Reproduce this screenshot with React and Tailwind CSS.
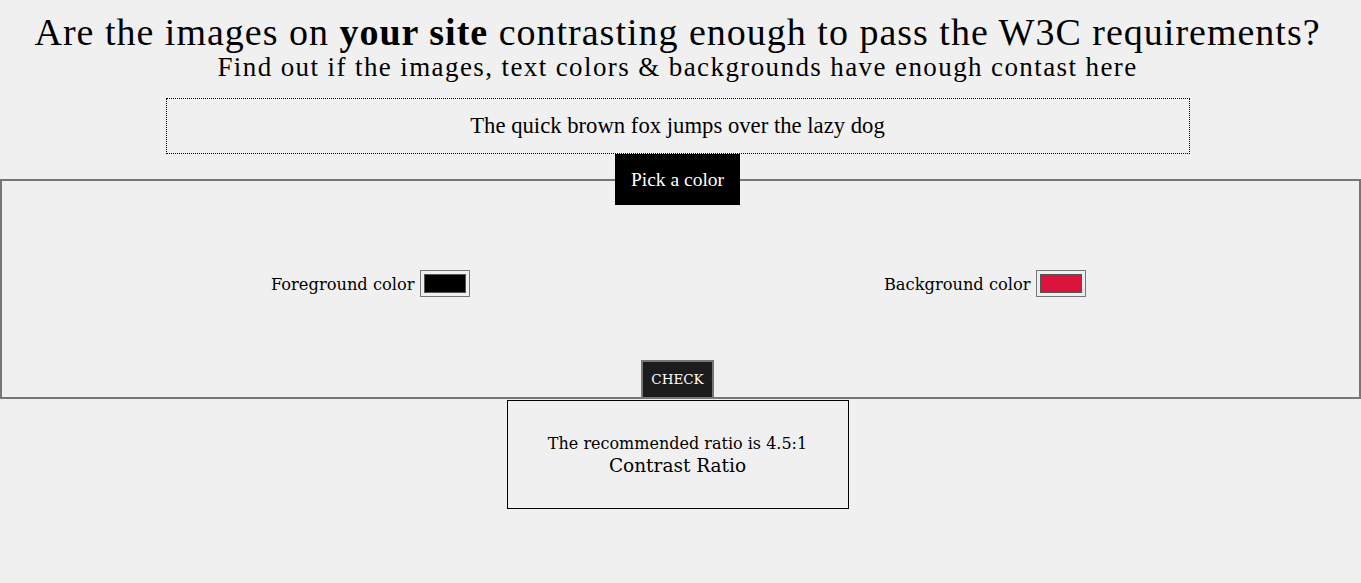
export default function App() {
  const garamond = { fontFamily: '"Liberation Serif", "Times New Roman", serif' };
  const basker = { fontFamily: '"DejaVu Serif", "Liberation Serif", serif' };
  return (
    <div className="min-h-[583px] bg-[#f0f0f0] text-black" style={garamond}>
      <div className="w-[1355px]">
        <header className="pt-[13px] text-center">
          <h1 className="text-[38px] leading-[38px] font-normal tracking-[1px]">
            Are the images on <b>your site</b> contrasting enough to pass the W3C requirements?
          </h1>
          <h2 className="text-[27px] leading-[32px] tracking-[1.4px]">
            Find out if the images, text colors &amp; backgrounds have enough contast here
          </h2>
        </header>

        <div className="mx-auto mt-[15px] flex h-[56px] w-[1024px] items-center justify-center border border-dotted border-black text-[22.7px]">
          The quick brown fox jumps over the lazy dog
        </div>
      </div>

      <fieldset className="border-2 border-[#777] pl-[61px] pr-[67px] pb-0 pt-0">
        <legend className="mx-auto bg-black px-[16px] py-[12px] text-[19.5px] leading-[27px] text-white">
          Pick a color
        </legend>
        <div className="grid grid-cols-2 pt-[65px]" style={basker}>
          <label className="flex items-center justify-center gap-[5px] text-[16.25px]">
            <span className="translate-y-[2px]">Foreground color</span>
            <span className="inline-block h-[27px] w-[50px] border border-[#777] bg-[#efefef] p-[3px]">
              <span className="block h-full w-full border border-[#555] bg-black" />
            </span>
          </label>
          <label className="flex items-center justify-center gap-[5px] text-[16.25px]">
            <span className="translate-y-[2px]">Background color</span>
            <span className="inline-block h-[27px] w-[50px] border border-[#777] bg-[#efefef] p-[3px]">
              <span className="block h-full w-full border border-[#555] bg-[#dc143c]" />
            </span>
          </label>
        </div>
        <div className="mt-[63px] flex justify-center">
          <button
            className="h-[37px] w-[73px] border-2 border-b-0 border-[#777] bg-[#1c1c1c] text-[13.5px] text-white"
            style={basker}
          >
            CHECK
          </button>
        </div>
      </fieldset>

      <div className="w-[1355px]">
        <div
          className="mx-auto mt-[1px] flex h-[109px] w-[342px] flex-col items-center justify-center border border-black"
          style={basker}
        >
          <p className="text-[16px] leading-[22px]">The recommended ratio is 4.5:1</p>
          <p className="text-[18.5px] leading-[22px]">Contrast Ratio</p>
        </div>
      </div>
    </div>
  );
}
